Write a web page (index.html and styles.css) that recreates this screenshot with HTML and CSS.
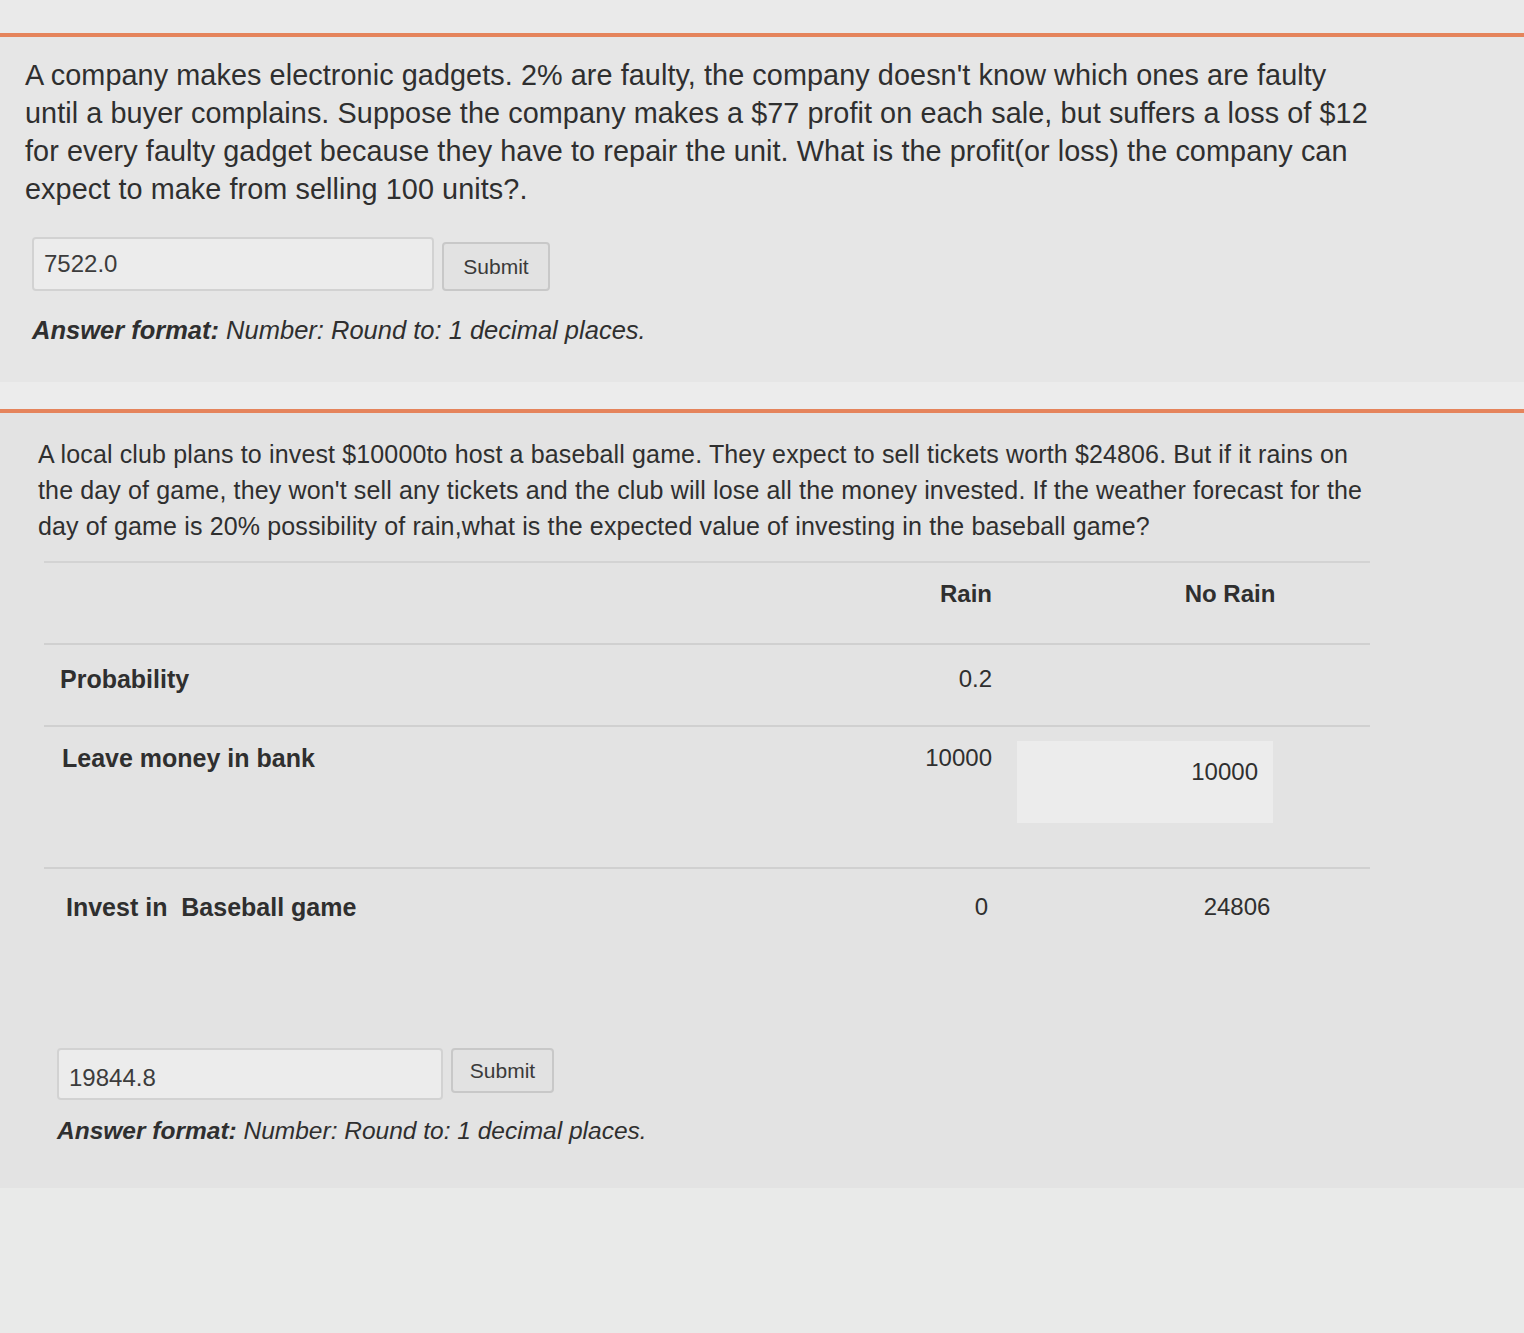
FILE: index.html
```html
<!DOCTYPE html>
<html>
<head>
<meta charset="utf-8">
<link rel="stylesheet" href="styles.css">
</head>
<body>
<div class="top-strip"></div>
<section class="question q1">
  <p class="prompt">A company makes electronic gadgets. 2% are faulty, the company doesn't know which ones are faulty<br>until a buyer complains. Suppose the company makes a $77 profit on each sale, but suffers a loss of $12<br>for every faulty gadget because they have to repair the unit. What is the profit(or loss) the company can<br>expect to make from selling 100 units?.</p>
  <div class="answer-row">
    <div class="answer-input">7522.0</div>
    <button class="submit">Submit</button>
  </div>
  <p class="format"><b>Answer format:</b> Number: Round to: 1 decimal places.</p>
</section>
<div class="gap-strip"></div>
<section class="question q2">
  <p class="prompt2">A local club plans to invest $10000to host a baseball game. They expect to sell tickets worth $24806. But if it rains on<br>the day of game, they won't sell any tickets and the club will lose all the money invested. If the weather forecast for the<br>day of game is 20% possibility of rain,what is the expected value of investing in the baseball game?</p>
  <div class="table">
    <div class="row head">
      <div class="cell label"></div>
      <div class="cell rain b">Rain</div>
      <div class="cell norain b">No Rain</div>
    </div>
    <div class="row prob">
      <div class="cell label b">Probability</div>
      <div class="cell rain">0.2</div>
      <div class="cell norain"></div>
    </div>
    <div class="row bank">
      <div class="cell label b">Leave money in bank</div>
      <div class="cell rain">10000</div>
      <div class="cell boxcell"><div class="valbox">10000</div></div>
    </div>
    <div class="row invest">
      <div class="cell label b">Invest in&nbsp; Baseball game</div>
      <div class="cell rain">0</div>
      <div class="cell norain">24806</div>
    </div>
  </div>
  <div class="answer-row a2">
    <div class="answer-input wide">19844.8</div>
    <button class="submit short">Submit</button>
  </div>
  <p class="format f2"><b>Answer format:</b> Number: Round to: 1 decimal places.</p>
</section>
<div class="bottom"></div>
</body>
</html>
```

FILE: styles.css
```css
* { box-sizing: border-box; }
html, body {
  margin: 0;
  padding: 0;
  background: #e8e9e8;
  font-family: "Liberation Sans", Arial, sans-serif;
  color: #2f2f2f;
}
.top-strip {
  height: 33px;
  background: #eaeaea;
}
.question {
  border-top: 4px solid #e5845c;
}
.q1 {
  background: #e6e6e6;
  padding: 19px 0 37px 25px;
}
.prompt {
  margin: 0;
  font-size: 28.8px;
  line-height: 38px;
  letter-spacing: 0.08px;
}
.answer-row {
  display: flex;
  align-items: flex-start;
  gap: 8px;
  margin-top: 29px;
  margin-left: 7px;
}
.answer-input {
  width: 402px;
  height: 54px;
  border: 2px solid #d2d2d2;
  border-radius: 4px;
  background: #ececec;
  font-size: 24px;
  line-height: 50px;
  padding-left: 10px;
  color: #3c3c3c;
}
.answer-input.wide {
  width: 386px;
  height: 52px;
  line-height: 56px;
}
.submit {
  margin-top: 5px;
  width: 108px;
  height: 49px;
  border: 2px solid #c8c8c8;
  border-radius: 4px;
  background: #e2e2e2;
  font-family: "Liberation Sans", Arial, sans-serif;
  font-size: 21px;
  color: #3a3a3a;
  padding: 0;
}
.submit.short {
  margin-top: 0;
  width: 103px;
  height: 45px;
  line-height: 42px;
  padding-bottom: 6px;
}
.format {
  margin: 24px 0 0 7px;
  font-size: 25.5px;
  line-height: 30px;
  font-style: italic;
}
.format b { font-weight: bold; }
.gap-strip {
  height: 27px;
  background: #ececec;
}
.q2 {
  background: #e3e3e3;
  padding: 23px 0 42px 38px;
}
.prompt2 {
  margin: 0;
  font-size: 25px;
  line-height: 36px;
  letter-spacing: 0.14px;
}
.table {
  margin: 17px 0 0 6px;
  width: 1326px;
  border-top: 2px solid #d3d3d3;
}
.row {
  display: grid;
  grid-template-columns: 856px 100px 370px;
  font-size: 24px;
  line-height: 30px;
}
.row.head, .row.prob, .row.bank {
  border-bottom: 2px solid #d0d0d0;
}
.row.head { height: 82px; padding-top: 16px; }
.row.prob { height: 82px; padding-top: 19px; }
.row.bank { height: 142px; padding-top: 16px; }
.row.invest { height: 150px; padding-top: 23px; }
.cell.label { padding-left: 16px; font-size: 25px; }
.cell.rain { text-align: right; padding-right: 8px; }
.cell.norain { text-align: center; padding-left: 90px; }
.row.invest .cell.rain { padding-right: 12px; }
.row.invest .cell.norain { padding-left: 104px; }
.b { font-weight: bold; }
.row.invest .label { padding-left: 22px; }
.row.bank .label { padding-left: 18px; }
.boxcell { padding-left: 17px; margin-top: -2px; }
.valbox {
  width: 256px;
  height: 82px;
  background: #ececec;
  text-align: right;
  padding-right: 15px;
  padding-top: 16px;
}
.answer-row.a2 {
  margin-top: 29px;
  margin-left: 19px;
}
.format.f2 {
  margin: 16px 0 0 19px;
  font-size: 24.5px;
}
.bottom {
  height: 150px;
  background: #e9eae9;
}
```
